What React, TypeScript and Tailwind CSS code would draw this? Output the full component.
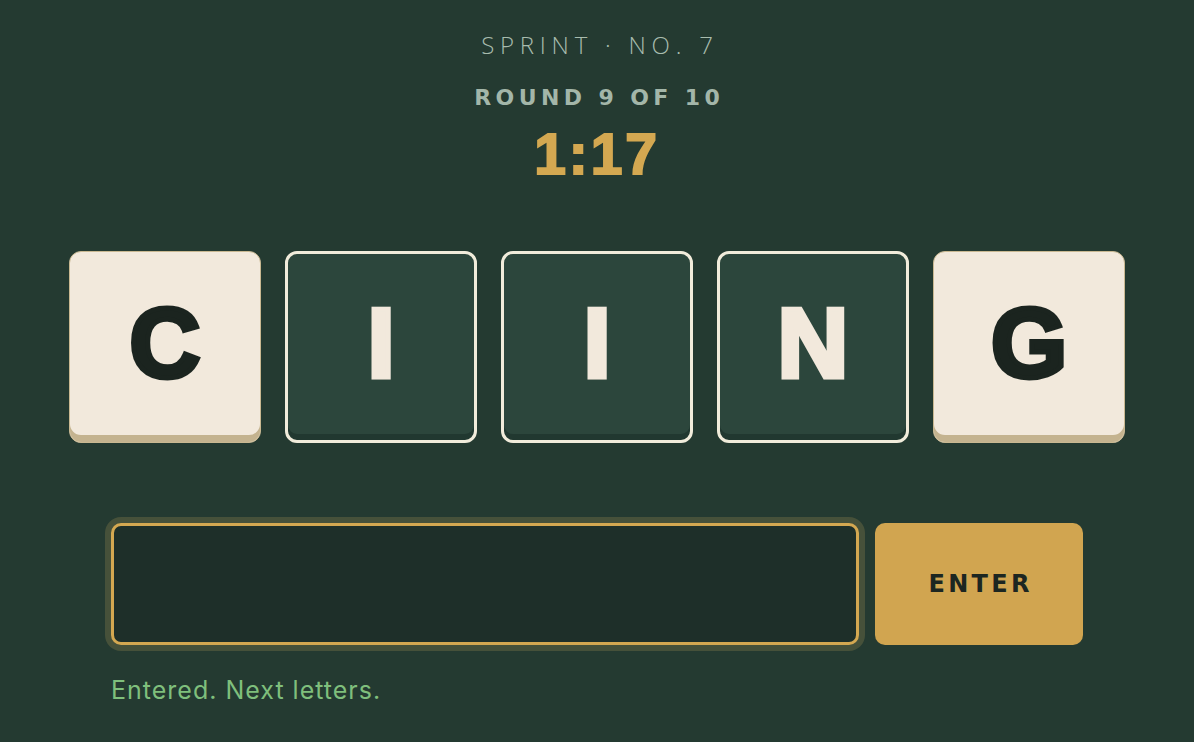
import React from "react";

type Tile = { letter: string; filled: boolean };

const tiles: Tile[] = [
  { letter: "C", filled: true },
  { letter: "I", filled: false },
  { letter: "I", filled: false },
  { letter: "N", filled: false },
  { letter: "G", filled: true },
];

function LetterTile({ letter, filled }: Tile) {
  return (
    <div
      className={`w-[192px] h-[192px] rounded-[12px] flex items-center justify-center ${
        filled
          ? "bg-[#f2e9dc] border border-[#c9b891] shadow-[inset_0_-7px_0_#c4b38f] text-[#1b241f]"
          : "bg-[#2c463c] border-[3px] border-[#f1ecdb] shadow-[inset_0_-6px_0_#213830] text-[#f2e9dc]"
      }`}
    >
      <span className="text-[98px] font-bold leading-none pb-[8px] [-webkit-text-stroke:5px_currentColor] font-['Liberation_Sans',Arial,sans-serif]">
        {letter}
      </span>
    </div>
  );
}

export default function App() {
  return (
    <div className="w-[1194px] h-[742px] bg-[#243a31] flex flex-col items-center font-['Inter',sans-serif]">
      {/* Header */}
      <div className="mt-[30px] text-[24px] tracking-[0.24em] text-[#a8bcae] font-light leading-[30px] pl-[0.24em] font-['Open_Sans',sans-serif]">
        SPRINT · NO. 7
      </div>
      <div className="mt-[24px] text-[22px] tracking-[0.2em] text-[#a3b6a9] font-bold leading-[28px] pl-[0.2em] font-['DejaVu_Sans',sans-serif]">
        ROUND 9 OF 10
      </div>
      <div className="mt-[10px] text-[57px] font-bold tracking-[0.05em] text-[#d4a851] leading-[64px] [-webkit-text-stroke:2px_currentColor] font-['Liberation_Sans',Arial,sans-serif]">
        1:17
      </div>

      {/* Tiles */}
      <div className="mt-[65px] flex gap-[24px]">
        {tiles.map((t, i) => (
          <LetterTile key={i} letter={t.letter} filled={t.filled} />
        ))}
      </div>

      {/* Input row */}
      <div className="mt-[80px] w-[972px] flex gap-[16px]">
        <div className="w-[748px] h-[122px] rounded-[10px] border-[3px] border-[#d4a851] bg-[#1e2f29] shadow-[0_0_0_6px_#46513a]" />
        <button className="w-[208px] h-[122px] rounded-[10px] bg-[#d1a550] text-[#1c2621] text-[24px] font-bold tracking-[0.14em] pl-[0.14em] font-['DejaVu_Sans',sans-serif]">
          ENTER
        </button>
      </div>
      <div className="mt-[30px] w-[972px] text-[25px] tracking-[0.04em] text-[#7fbf7c] leading-[30px]">
        Entered. Next letters.
      </div>
    </div>
  );
}
